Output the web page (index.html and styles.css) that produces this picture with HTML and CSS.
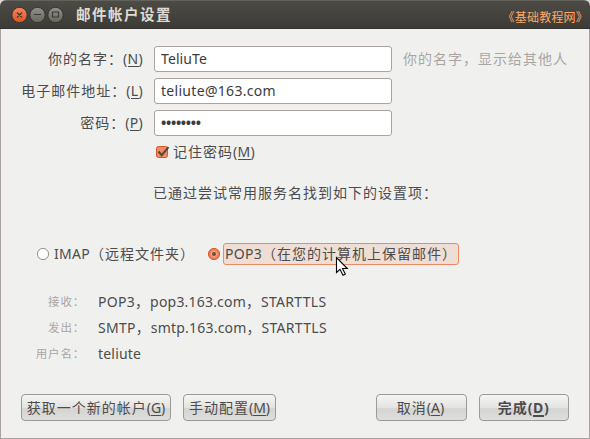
FILE: index.html
```html
<!DOCTYPE html>
<html lang="zh-CN">
<head>
<meta charset="utf-8">
<title>邮件帐户设置</title>
<link rel="stylesheet" href="styles.css">
</head>
<body>
<div class="window">
  <header class="titlebar">
    <svg class="controls" width="56" height="18" viewBox="0 0 56 18">
      <defs>
        <linearGradient id="orange" x1="0" y1="0" x2="0" y2="1"><stop offset="0" stop-color="#f48563"/><stop offset="1" stop-color="#e4501f"/></linearGradient>
        <linearGradient id="gray" x1="0" y1="0" x2="0" y2="1"><stop offset="0" stop-color="#92918a"/><stop offset="1" stop-color="#66655d"/></linearGradient>
      </defs>
      <circle cx="9.5" cy="9" r="7.7" fill="url(#orange)" stroke="#35342f"/>
      <circle cx="27.5" cy="9" r="7.7" fill="url(#gray)" stroke="#35342f"/>
      <circle cx="45.5" cy="9" r="7.7" fill="url(#gray)" stroke="#35342f"/>
      <path d="M7 6.5l5 5m0-5l-5 5M24 8.5h7M42.500 6h6v5h-6z" fill="none" stroke="#3c3b37" stroke-width="1.2"/>
    </svg>
    <h1>邮件帐户设置</h1>
    <span class="mark">《基础教程网》</span>
  </header>
  <main>
    <div class="form">
      <label>你的名字：<span class="key">(<u>N</u>)</span></label>
      <div class="field name">TeliuTe</div>
      <span class="hint">你的名字，显示给其他人</span>
      <label>电子邮件地址：<span class="key">(<u>L</u>)</span></label>
      <div class="field mail">teliute@163.com</div>
      <span></span>
      <label>密码：<span class="key">(<u>P</u>)</span></label>
      <div class="field dots">••••••••</div>
    </div>
    <div class="remember">
      <svg width="16" height="14" viewBox="0 0 16 14"><rect x="1.5" y="1.500" width="11" height="11" rx="2" fill="#f28a62" stroke="#d4582d"/><path d="M3.500 6.500l3.200 3.700 6.800-8" fill="none" stroke="#59443a" stroke-width="2"/></svg>
      <span>记住密码<span class="key">(<u>M</u>)</span></span>
    </div>
    <p class="message">已通过尝试常用服务名找到如下的设置项：</p>
    <div class="choices">
      <svg width="14" height="14" viewBox="0 0 14 14"><circle cx="7" cy="7" r="5.6" fill="#fff" stroke="#99938f"/></svg>
      <span class="imap"><span class="latin">IMAP</span>（远程文件夹）</span>
      <svg width="14" height="14" viewBox="0 0 14 14"><circle cx="7" cy="7" r="5.6" fill="#f28358" stroke="#d4582d"/><circle cx="7" cy="7" r="2.6" fill="#75503f" stroke="#f8b292"/></svg>
      <span class="pop"><span class="latin">POP3</span>（在您的计算机上保留邮件）</span>
    </div>
    <dl class="details">
      <dt>接收：</dt><dd><span class="latin">POP3</span>，<span class="host">pop3.163.com</span>，<span class="tls">STARTTLS</span></dd>
      <dt>发出：</dt><dd><span class="latin">SMTP</span>，<span class="host">smtp.163.com</span>，<span class="tls">STARTTLS</span></dd>
      <dt>用户名：</dt><dd><span class="host">teliute</span></dd>
    </dl>
    <div class="buttons">
      <div class="button account">获取一个新的帐户<span class="key">(<u>G</u>)</span></div>
      <div class="button manual">手动配置<span class="key">(<u>M</u>)</span></div>
      <div class="button cancel">取消<span class="key">(<u>A</u>)</span></div>
      <div class="button done">完成<span class="key">(<u>D</u>)</span></div>
    </div>
  </main>
  <svg class="pointer" width="14" height="21" viewBox="0 0 14 21"><path d="M1.500 1.500v15l3.500-3.200 3 6 2.300-1.200-2.800-5.600h4.800z" fill="#fff" stroke="#000" stroke-width="1.1"/></svg>
</div>
</body>
</html>
```

FILE: styles.css
```css
* { box-sizing: border-box; }
body {
  margin: 0;
  background: #dcd8d5;
  color: #4c4c4c;
  font: 14px/20px "Noto Sans CJK SC", sans-serif;
  letter-spacing: 1px;
  white-space: nowrap;
}
.window {
  position: relative;
  width: 590px;
  height: 439px;
  overflow: hidden;
  border-radius: 6px 6px 0 0;
  background: #f0f1ef;
}
.titlebar {
  display: flex;
  align-items: center;
  height: 29px;
  padding: 0 8px 0 10px;
  background: linear-gradient(#4c4b45, #3c3b37);
  border-top: 1px solid #62615a;
  border-bottom: 1px solid #33322e;
}
.controls { margin-top: 1px; }
h1 {
  margin: 0 0 2px 10px;
  color: #dfdbd2;
  font-size: 14.5px;
  line-height: 20px;
  letter-spacing: 1.5px;
}
.mark {
  margin: 4px 0 0 auto;
  color: #ffa866;
  font-size: 12px;
  letter-spacing: 0.2px;
  font-feature-settings: "halt" 1;
}
main {
  height: 410px;
  padding: 17px 20px 0;
  border: 1px solid #aaa29f;
  border-top: 0;
}
.form {
  display: grid;
  grid-template-columns: 122px 238px auto;
  grid-auto-rows: 26px;
  row-gap: 6px;
  column-gap: 11px;
  align-items: center;
}
label { justify-self: end; margin-bottom: 1px; }
.key, .latin, .host, .tls, .field {
  font-family: "Noto Sans", sans-serif;
  letter-spacing: 0.3px;
}
.button .key { letter-spacing: 0; }
.host { letter-spacing: 0.2px; }
u { text-decoration: none; border-bottom: 1px solid #4c4c4c; display: inline-block; line-height: 15px; }
.field {
  height: 26px;
  padding-left: 6px;
  border: 1px solid #aaa29f;
  border-radius: 3px;
  background: #fff;
  color: #3c3c3c;
  line-height: 24px;
}
.name { letter-spacing: 0.1px; }
.dots { font-weight: 700; font-size: 14px; letter-spacing: -0.3px; }
.hint { color: #aaa5a2; margin-bottom: 3px; }
.remember {
  display: flex;
  align-items: center;
  height: 20px;
  margin: 6px 0 0 134px;
}
.remember svg { margin-right: 2px; }
.remember > span { margin-bottom: 2px; }
.message { margin: 20px 0 0 132px; }
.choices {
  display: flex;
  align-items: center;
  height: 22px;
  margin: 41px 0 0 15px;
}
.imap { width: 149px; margin: 0 4px 0 4px; line-height: 20px; padding-bottom: 1px; }
.pop {
  width: 236px;
  height: 22px;
  margin-left: 2px;
  padding-left: 1px;
  border: 1px solid #ee8a62;
  border-radius: 3px;
  background: #eeded5;
  line-height: 19px;
}
.details {
  display: grid;
  grid-template-columns: 64px auto;
  grid-auto-rows: 26px;
  column-gap: 13px;
  align-items: center;
  margin: 23px 0 0;
}
dt {
  color: #aaa5a2;
  font-size: 11.5px;
  letter-spacing: 0.8px;
  text-align: right;
  padding-bottom: 1px;
}
dd { margin: 0; }
.buttons { display: flex; margin-top: 28px; }
.button {
  height: 27px;
  border: 1px solid #9f9996;
  border-radius: 4px;
  background: linear-gradient(#f5f5f3, #e3e3e1 50%, #d4d4d2 55%, #dededc);
  line-height: 25px;
  text-align: center;
}
.account { width: 150px; }
.manual { width: 93px; margin-left: 12px; }
.cancel { width: 91px; margin-left: 100px; padding-right: 2px; }
.done { width: 90px; margin-left: 12px; padding-right: 1px; font-weight: 700; }
.done .key { letter-spacing: 0.6px; }
.done u { border-bottom-width: 2px; }
.pointer { position: absolute; left: 335px; top: 256px; }
```
